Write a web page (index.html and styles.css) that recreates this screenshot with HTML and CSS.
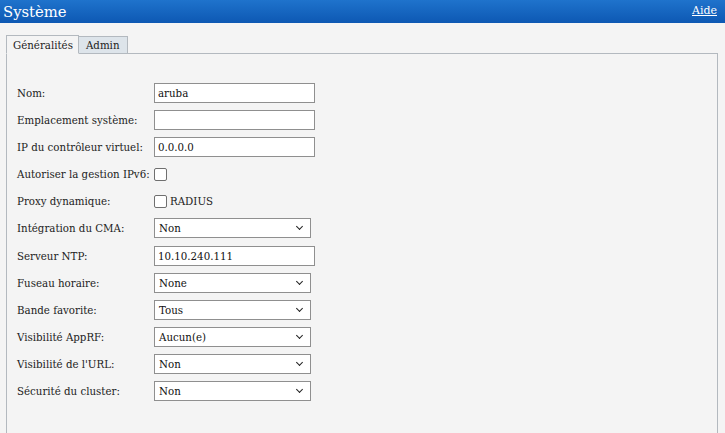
FILE: index.html
```html
<!DOCTYPE html>
<html lang="fr">
<head>
<meta charset="utf-8">
<link rel="stylesheet" href="styles.css">
</head>
<body>
<div class="header">
  <span class="title">Système</span>
  <a class="help" href="#">Aide</a>
</div>
<div class="content">
  <div class="tabs">
    <div class="tab active">Généralités</div>
    <div class="tab">Admin</div>
  </div>
  <div class="panel">
    <div class="form">
      <div class="row"><label class="lbl">Nom:</label><input class="txt" type="text" value="aruba"></div>
      <div class="row"><label class="lbl">Emplacement système:</label><input class="txt" type="text" value=""></div>
      <div class="row"><label class="lbl">IP du contrôleur virtuel:</label><input class="txt" type="text" value="0.0.0.0"></div>
      <div class="row"><label class="lbl">Autoriser la gestion IPv6:</label><span class="chk"></span></div>
      <div class="row"><label class="lbl">Proxy dynamique:</label><span class="chk"></span><span class="chklbl">RADIUS</span></div>
      <div class="row"><label class="lbl">Intégration du CMA:</label><div class="sel">Non<span class="arrow"></span></div></div>
      <div class="row"><label class="lbl">Serveur NTP:</label><input class="txt" type="text" value="10.10.240.111"></div>
      <div class="row"><label class="lbl">Fuseau horaire:</label><div class="sel">None<span class="arrow"></span></div></div>
      <div class="row"><label class="lbl">Bande favorite:</label><div class="sel">Tous<span class="arrow"></span></div></div>
      <div class="row"><label class="lbl">Visibilité AppRF:</label><div class="sel">Aucun(e)<span class="arrow"></span></div></div>
      <div class="row"><label class="lbl">Visibilité de l'URL:</label><div class="sel">Non<span class="arrow"></span></div></div>
      <div class="row"><label class="lbl">Sécurité du cluster:</label><div class="sel">Non<span class="arrow"></span></div></div>
    </div>
  </div>
</div>
</body>
</html>
```
FILE: styles.css
```css
html, body {
  margin: 0;
  padding: 0;
  height: 100%;
  overflow: hidden;
}
body {
  background: #f4f4f4;
  font-family: "DejaVu Serif", serif;
  font-size: 10.25px;
  color: #222;
}
.header {
  height: 23px;
  background: linear-gradient(#1f73cc, #0d58b3);
  display: flex;
  align-items: center;
  justify-content: space-between;
  padding: 0 8px 0 3px;
}
.title {
  color: #fff;
  font-size: 14.8px;
  line-height: 23px;
}
.help {
  color: #fff;
  font-size: 11px;
  text-decoration: underline;
  align-self: flex-start;
  margin-top: 4px;
}
.content {
  padding: 12px 7px 0 6px;
  height: calc(100% - 35px);
  display: flex;
  flex-direction: column;
}
.tabs {
  display: flex;
  align-items: flex-end;
  margin-bottom: -1px;
  position: relative;
  z-index: 1;
}
.tab {
  border: 1px solid #b3b9bf;
  padding: 0 7px;
  height: 16px;
  line-height: 16px;
  font-size: 10.25px;
  background: #dde4ea;
  border-left: none;
}
.tab.active {
  border-left: 1px solid #b3b9bf;
  background: #f4f4f4;
  border-bottom-color: #f4f4f4;
  height: 17px;
  line-height: 18px;
  padding: 0 5px 0 6px;
}
.panel {
  flex: 1;
  border: 1px solid #b3b9bf;
  border-bottom: none;
}
.form {
  padding: 29px 0 0 10px;
  display: flex;
  flex-direction: column;
  gap: 7.1px;
}
.row {
  display: flex;
  align-items: center;
  height: 20px;
}
.lbl {
  width: 137px;
  flex: none;
}
.txt {
  box-sizing: border-box;
  width: 161px;
  height: 20px;
  border: 1px solid #8f8f8f;
  background: #fff;
  font-family: "DejaVu Serif", serif;
  font-size: 10.25px;
  color: #111;
  padding: 0 3px;
  margin: 0;
  outline: none;
}
.chk {
  box-sizing: border-box;
  width: 13px;
  height: 13px;
  border: 1px solid #6f6f6f;
  border-radius: 2px;
  background: #fff;
}
.chklbl {
  margin-left: 3px;
}
.sel {
  box-sizing: border-box;
  width: 157px;
  height: 20px;
  border: 1px solid #8f8f8f;
  background: #fff;
  display: flex;
  align-items: center;
  justify-content: space-between;
  padding: 0 8px 0 4px;
  color: #111;
}
.arrow {
  width: 4px;
  height: 4px;
  border-right: 1.5px solid #222;
  border-bottom: 1.5px solid #222;
  transform: rotate(45deg);
  margin-top: -3px;
}
```
